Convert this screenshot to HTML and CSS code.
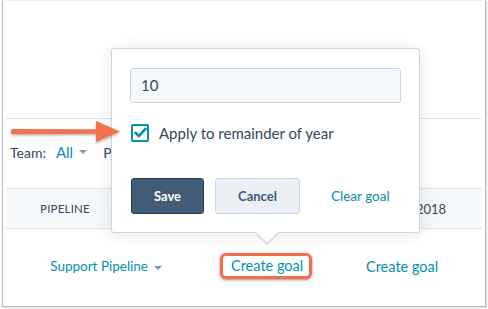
FILE: index.html
```html
<!DOCTYPE html>
<html>
<head>
<meta charset="utf-8">
<link rel="stylesheet" href="styles.css">
</head>
<body>
<div class="frame">
  <div class="top-space"></div>
  <div class="filters">
    <span class="label">Team:</span>
    <span class="link">All</span><span class="caret"></span>
    <span class="label p">P</span>
  </div>
  <div class="thead">
    <div class="th first">PIPELINE</div>
    <div class="th last">2018</div>
  </div>
  <div class="trow">
    <div class="td pipe"><span class="link">Support Pipeline</span><span class="caret"></span></div>
    <div class="td goal"><span class="link highlight">Create goal</span></div>
    <div class="td goal2"><span class="link">Create goal</span></div>
  </div>

  <div class="popover">
    <div class="input">10</div>
    <label class="check-row">
      <span class="checkbox">
        <svg width="13" height="11" viewBox="0 0 13 11"><path d="M1.5 5.8 L4.8 9 L11.5 1.8" fill="none" stroke="#0091ae" stroke-width="2.6" stroke-linecap="round" stroke-linejoin="round"/></svg>
      </span>
      <span class="check-text">Apply to remainder of year</span>
    </label>
    <div class="actions">
      <span class="btn save">Save</span>
      <span class="btn cancel">Cancel</span>
      <span class="link clear">Clear goal</span>
    </div>
    <span class="pointer"></span>
  </div>

  <svg class="arrow" width="116" height="28" viewBox="0 0 116 28">
    <defs>
      <filter id="sh" x="-10%" y="-30%" width="120%" height="170%">
        <feDropShadow dx="0" dy="1.5" stdDeviation="1" flood-color="#000" flood-opacity="0.3"/>
      </filter>
    </defs>
    <g filter="url(#sh)">
      <path d="M4 11 L88 11.2 L88 3 L112 13.5 L88 24 L88 15.8 L4 16 Q1.5 13.5 4 11 Z" fill="#f26f4e"/>
    </g>
  </svg>
</div>
</body>
</html>
```
FILE: styles.css
```css
html, body {
  margin: 0;
  padding: 0;
  background: #ffffff;
}
body {
  width: 488px;
  height: 309px;
  overflow: hidden;
  font-family: "Lato", "Open Sans", sans-serif;
  color: #33475b;
}
.frame {
  position: relative;
  box-sizing: border-box;
  margin-left: 2px;
  width: 484px;
  height: 307px;
  border: 1px solid #b8b8b8;
  border-top-color: #f2f2f2;
  box-shadow: 1px 1px 2px rgba(0,0,0,0.15);
  padding: 0 3px;
}
.top-space {
  height: 117px;
  border-bottom: 1px solid #dfe3eb;
}
.filters {
  height: 69px;
  display: flex;
  align-items: center;
  font-size: 14px;
  padding-left: 4px;
  padding-bottom: 3px;
  box-sizing: border-box;
}
.label { color: #33475b; }
.filters .link { margin-left: 10px; font-size: 15px; }
.filters .p { margin-left: 16px; }
.link { color: #0091ae; }
.caret {
  display: inline-block;
  width: 0;
  height: 0;
  border-left: 4px solid transparent;
  border-right: 4px solid transparent;
  border-top: 4px solid #7c98b6;
  margin-left: 6px;
  vertical-align: middle;
}
.thead {
  box-sizing: border-box;
  height: 41px;
  background: #f5f8fa;
  border-top: 1px solid #dfe3eb;
  border-bottom: 1px solid #dfe3eb;
  display: flex;
  align-items: center;
  justify-content: space-between;
  font-size: 11.5px;
  color: #33475b;
}
.th.first { width: 118px; text-align: center; letter-spacing: 0.2px; }
.th.last { width: 66px; text-align: left; font-size: 13px; }
.trow {
  display: flex;
  align-items: center;
  height: 74px;
  font-size: 14.5px;
  white-space: nowrap;
}
.td { flex-shrink: 0; }
.td.pipe { width: 156px; text-align: right; box-sizing: border-box; font-size: 13.5px; }
.td.goal { width: 146px; box-sizing: border-box; display: flex; justify-content: flex-start; padding-left: 58px; }
.td.goal2 { padding-left: 58px; }
.highlight {
  display: inline-block;
  border: 3px solid #f26f4e;
  border-radius: 6px;
  padding: 1px 6px 2px 8px;
  box-shadow: 0 1px 3px rgba(0,0,0,0.45);
  background: #fff;
}
.popover {
  position: absolute;
  left: 108px;
  top: 47px;
  box-sizing: border-box;
  width: 309px;
  height: 185px;
  background: #fff;
  border: 1px solid #cbd6e2;
  border-radius: 3px;
  box-shadow: 0 2px 18px rgba(0,0,0,0.10);
  padding: 19px 18px 0 18px;
}
.input {
  box-sizing: border-box;
  height: 35px;
  background: #f5f8fa;
  border: 1px solid #cbd6e2;
  border-radius: 3px;
  font-size: 15px;
  line-height: 33px;
  padding-left: 10px;
  color: #33475b;
}
.check-row {
  display: flex;
  align-items: center;
  margin-top: 20px;
  height: 19px;
}
.checkbox {
  box-sizing: border-box;
  width: 18px;
  height: 18px;
  border: 2px solid #0091ae;
  border-radius: 2px;
  display: flex;
  align-items: center;
  justify-content: center;
  margin-left: 1px;
}
.check-text {
  margin-left: 10px;
  font-size: 15px;
  color: #33475b;
}
.actions {
  display: flex;
  align-items: center;
  margin-top: 36px;
}
.btn {
  box-sizing: border-box;
  height: 36px;
  display: inline-flex;
  align-items: center;
  justify-content: center;
  border-radius: 3px;
  font-size: 13px;
  font-weight: 700;
}
.btn.save {
  width: 73px;
  margin-left: 1px;
  background: #425b76;
  border: 1px solid #2d3e50;
  color: #fff;
}
.btn.cancel {
  width: 85px;
  margin-left: 11px;
  background: #eaf0f6;
  border: 1px solid #cbd6e2;
  color: #425b76;
}
.clear {
  margin-left: 31px;
  font-size: 13.5px;
}
.pointer {
  position: absolute;
  left: 142px;
  bottom: -13px;
  width: 0;
  height: 0;
  border-left: 13px solid transparent;
  border-right: 13px solid transparent;
  border-top: 13px solid #cbd6e2;
}
.pointer::after {
  content: "";
  position: absolute;
  left: -12px;
  top: -14px;
  border-left: 12px solid transparent;
  border-right: 12px solid transparent;
  border-top: 12px solid #fff;
}
.arrow {
  position: absolute;
  left: 5px;
  top: 117px;
}
```
